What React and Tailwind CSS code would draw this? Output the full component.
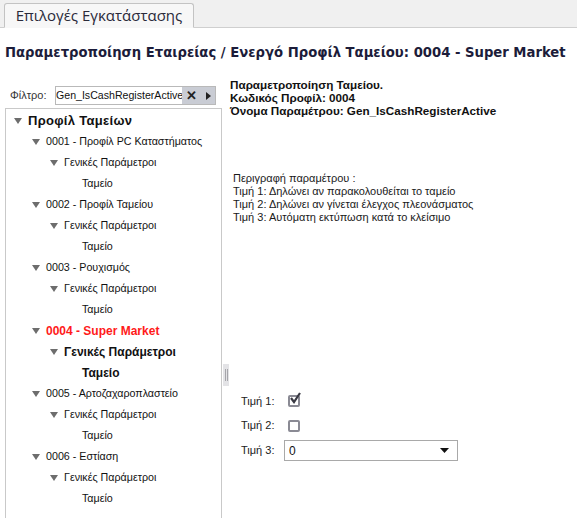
import React from 'react';

const profiles = [
  { code: '0001 - Προφίλ PC Καταστήματος' },
  { code: '0002 - Προφίλ Ταμείου' },
  { code: '0003 - Ρουχισμός' },
  { code: '0004 - Super Market', active: true },
  { code: '0005 - Αρτοζαχαροπλαστείο' },
  { code: '0006 - Εστίαση' },
];

function Arrow() {
  return (
    <svg width="8" height="6" viewBox="0 0 8 6" className="shrink-0">
      <path d="M0 0 L8 0 L4 6 Z" fill="#6d6d6d" />
    </svg>
  );
}

function TreeRow({ level, arrow, children, className = '' }) {
  const pad = ['pl-[8px]', 'pl-[26px]', 'pl-[44px]', 'pl-[76px]'][level];
  return (
    <div className={`h-[21px] flex items-center ${pad}`}>
      {arrow && <Arrow />}
      <span className={`${arrow ? 'ml-[6px]' : ''} whitespace-nowrap ${className}`}>{children}</span>
    </div>
  );
}

export default function App() {
  return (
    <div className="w-[577px] h-[518px] overflow-hidden bg-white font-['Liberation_Sans',Arial,sans-serif] text-[#111122]">
      {/* tab strip */}
      <div className="h-[28px] bg-[#f0f0f0] border-b border-[#cfcfcf] flex items-end pl-[4px]">
        <div className="h-[25px] w-[190px] -mb-px border border-[#c3c3c3] border-b-[#f7f7f7] rounded-t-[3px] bg-[#f7f7f7] flex items-center justify-center text-[15px] text-[#2a2a3a] font-['Open_Sans',sans-serif]">
          Επιλογές Εγκατάστασης
        </div>
      </div>

      {/* title */}
      <div className="h-[50px] flex items-center pl-[5px] text-[13.2px] font-bold text-[#1c1c3a] whitespace-nowrap font-['DejaVu_Sans',sans-serif]">
        Παραμετροποίηση Εταιρείας / Ενεργό Προφίλ Ταμείου: 0004 - Super Market
      </div>

      <div className="flex">
        {/* left panel */}
        <div className="w-[222px] shrink-0 pl-[5px] pt-[8px]">
          <div className="flex items-center h-[19px]">
            <span className="text-[11px] text-[#333] ml-[5px] w-[45px]">Φίλτρο:</span>
            <div className="flex h-[19px] border border-[#b9b9b9] w-[161px]">
              <div className="flex-1 min-w-0 overflow-hidden flex items-center bg-white text-[10.6px] text-[#111] whitespace-nowrap">
                <span>Gen_IsCashRegisterActive</span>
              </div>
              <div className="w-[33px] shrink-0 bg-[#c9ccd4] flex items-center justify-between px-[4px]">
                <span className="text-[13px] font-bold text-[#222] leading-none">✕</span>
                <svg width="5" height="8" viewBox="0 0 5 8">
                  <path d="M0 0 L5 4 L0 8 Z" fill="#222" />
                </svg>
              </div>
            </div>
          </div>
          <div className="mt-[3px] h-[420px] border border-[#c9c9c9] pt-px text-[10.7px] text-[#111]">
            <TreeRow level={0} arrow className="font-bold text-[13px] tracking-[0.3px]">Προφίλ Ταμείων</TreeRow>
            {profiles.map((p) => (
              <React.Fragment key={p.code}>
                <TreeRow level={1} arrow className={p.active ? 'font-bold text-[12px] text-[#ff1a1a]' : ''}>
                  {p.code}
                </TreeRow>
                <TreeRow level={2} arrow className={p.active ? 'font-bold text-[12px]' : ''}>
                  Γενικές Παράμετροι
                </TreeRow>
                <TreeRow level={3} className={p.active ? 'font-bold text-[12px]' : ''}>
                  Ταμείο
                </TreeRow>
              </React.Fragment>
            ))}
          </div>
        </div>

        {/* splitter */}
        <div className="w-[7px] shrink-0 flex flex-col">
          <div className="h-[286px]" />
          <div className="ml-[1px] w-[6px] h-[22px] bg-[#e3e3e6] flex justify-center gap-[1px] pt-[5px]">
            <div className="w-px h-[12px] bg-[#a5a5aa]" />
            <div className="w-px h-[12px] bg-[#a5a5aa]" />
          </div>
        </div>

        {/* right panel */}
        <div className="flex-1 pl-[1px]">
          <div className="text-[11.7px] font-bold leading-[13px] text-[#111]">
            <div>Παραμετροποίηση Ταμείου.</div>
            <div>Κωδικός Προφίλ: 0004</div>
            <div>Όνομα Παραμέτρου: Gen_IsCashRegisterActive</div>
          </div>
          <div className="mt-[55px] pl-[3px] text-[11px] leading-[13px] text-[#1a1a1a]">
            <div>Περιγραφή παραμέτρου :</div>
            <div>Τιμή 1: Δηλώνει αν παρακολουθείται το ταμείο</div>
            <div>Τιμή 2: Δηλώνει αν γίνεται έλεγχος πλεονάσματος</div>
            <div>Τιμή 3: Αυτόματη εκτύπωση κατά το κλείσιμο</div>
          </div>

          <div className="mt-[165px] pl-[11px] text-[11px] text-[#222]">
            <div className="h-[24px] flex items-center">
              <span className="w-[47px]">Τιμή 1:</span>
              <div className="w-[12px] h-[12px] border-2 border-[#8a8a94] rounded-[2px] relative">
                <svg width="14" height="14" viewBox="0 0 14 14" className="absolute -top-[5px] -left-[1px]">
                  <path d="M2 6 L5 10 L11 1" stroke="#3a3a44" strokeWidth="2.2" fill="none" />
                </svg>
              </div>
            </div>
            <div className="h-[25px] flex items-center">
              <span className="w-[47px]">Τιμή 2:</span>
              <div className="w-[12px] h-[12px] border-2 border-[#8a8a94] rounded-[2px]" />
            </div>
            <div className="h-[25px] flex items-center">
              <span className="w-[43px]">Τιμή 3:</span>
              <div className="w-[174px] h-[21px] border border-[#a9a9a9] flex items-center justify-between pl-[4px] pr-[8px] bg-white">
                <span className="text-[12px] text-[#111]">0</span>
                <svg width="9" height="5" viewBox="0 0 9 5">
                  <path d="M0 0 L9 0 L4.5 5 Z" fill="#111" />
                </svg>
              </div>
            </div>
          </div>
        </div>
      </div>
    </div>
  );
}
